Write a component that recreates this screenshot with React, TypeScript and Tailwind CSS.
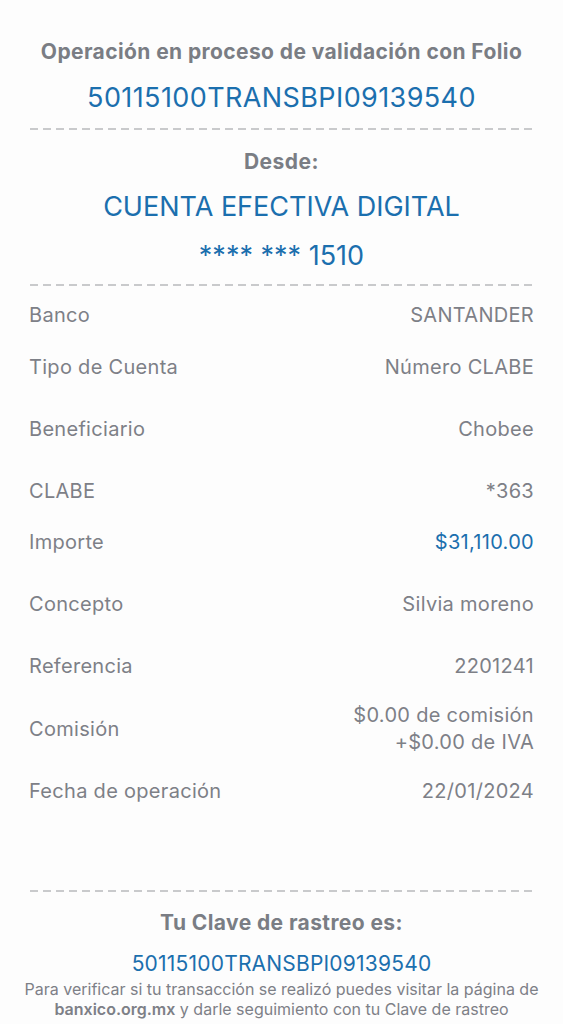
import React from 'react';

// gap above each row (px), tuned to the receipt spacing
const rows = [
  { label: 'Banco', value: 'SANTANDER', mt: 'mt-[16px]' },
  { label: 'Tipo de Cuenta', value: 'Número CLABE', mt: 'mt-[25px]' },
  { label: 'Beneficiario', value: 'Chobee', mt: 'mt-[35px]' },
  { label: 'CLABE', value: '*363', mt: 'mt-[35px]' },
  { label: 'Importe', value: '$31,110.00', mt: 'mt-[24px]', blue: true },
  { label: 'Concepto', value: 'Silvia moreno', mt: 'mt-[35px]' },
  { label: 'Referencia', value: '2201241', mt: 'mt-[35px]' },
  { label: 'Comisión', value: '$0.00 de comisión\n+$0.00 de IVA', mt: 'mt-[22px]' },
  { label: 'Fecha de operación', value: '22/01/2024', mt: 'mt-[22px]' },
];

function Dashes() {
  return (
    <div className="mx-[30px] h-[2px] bg-[repeating-linear-gradient(to_right,#c9cacc_0_8px,transparent_8px_13px)]" />
  );
}

export default function App() {
  return (
    <div className="w-[563px] h-[1024px] overflow-hidden bg-[#fdfdfd] font-['Inter',sans-serif] text-[#7d8087]">
      {/* Folio */}
      <div className="pt-[39px] text-center">
        <h1 className="text-[21px] leading-[26px] font-bold tracking-[0.4px] text-[#7a7d84]">
          Operación en proceso de validación con Folio
        </h1>
        <p className="mt-[17px] text-[27px] leading-[32px] tracking-[0.4px] text-[#1b6fae]">50115100TRANSBPI09139540</p>
      </div>
      <div className="mt-[14px]"><Dashes /></div>

      {/* Desde */}
      <div className="pt-[20px] text-center">
        <h2 className="text-[21px] leading-[24px] font-bold tracking-[0.5px] text-[#7a7d84]">Desde:</h2>
        <p className="mt-[17px] text-[27px] leading-[32px] text-[#1b6fae]">CUENTA EFECTIVA DIGITAL</p>
        <p className="mt-[17px] text-[27px] leading-[32px] text-[#1b6fae]">**** *** 1510</p>
      </div>
      <div className="mt-[12px]"><Dashes /></div>

      {/* Detalle */}
      <div className="px-[29px]">
        {rows.map((r) => (
          <div key={r.label} className={`${r.mt} flex items-center justify-between text-[20px] leading-[27px] tracking-[0.3px]`}>
            <span>{r.label}</span>
            <span className={`text-right whitespace-pre-line ${r.blue ? 'text-[#1b6fae]' : ''}`}>{r.value}</span>
          </div>
        ))}
      </div>

      <div className="mt-[85px]"><Dashes /></div>

      {/* Clave de rastreo */}
      <div className="pt-[18px] text-center">
        <h2 className="text-[21px] leading-[26px] font-bold tracking-[0.4px] text-[#7a7d84]">Tu Clave de rastreo es:</h2>
        <p className="mt-[15px] text-[21px] leading-[26px] tracking-[0.2px] text-[#1b6fae]">50115100TRANSBPI09139540</p>
        <p className="mt-[2px] text-[16px] leading-[20px] text-[#7d8087]">
          Para verificar si tu transacción se realizó puedes visitar la página de
          <br />
          <span className="font-semibold">banxico.org.mx</span> y darle seguimiento con tu Clave de rastreo
        </p>
      </div>
    </div>
  );
}
